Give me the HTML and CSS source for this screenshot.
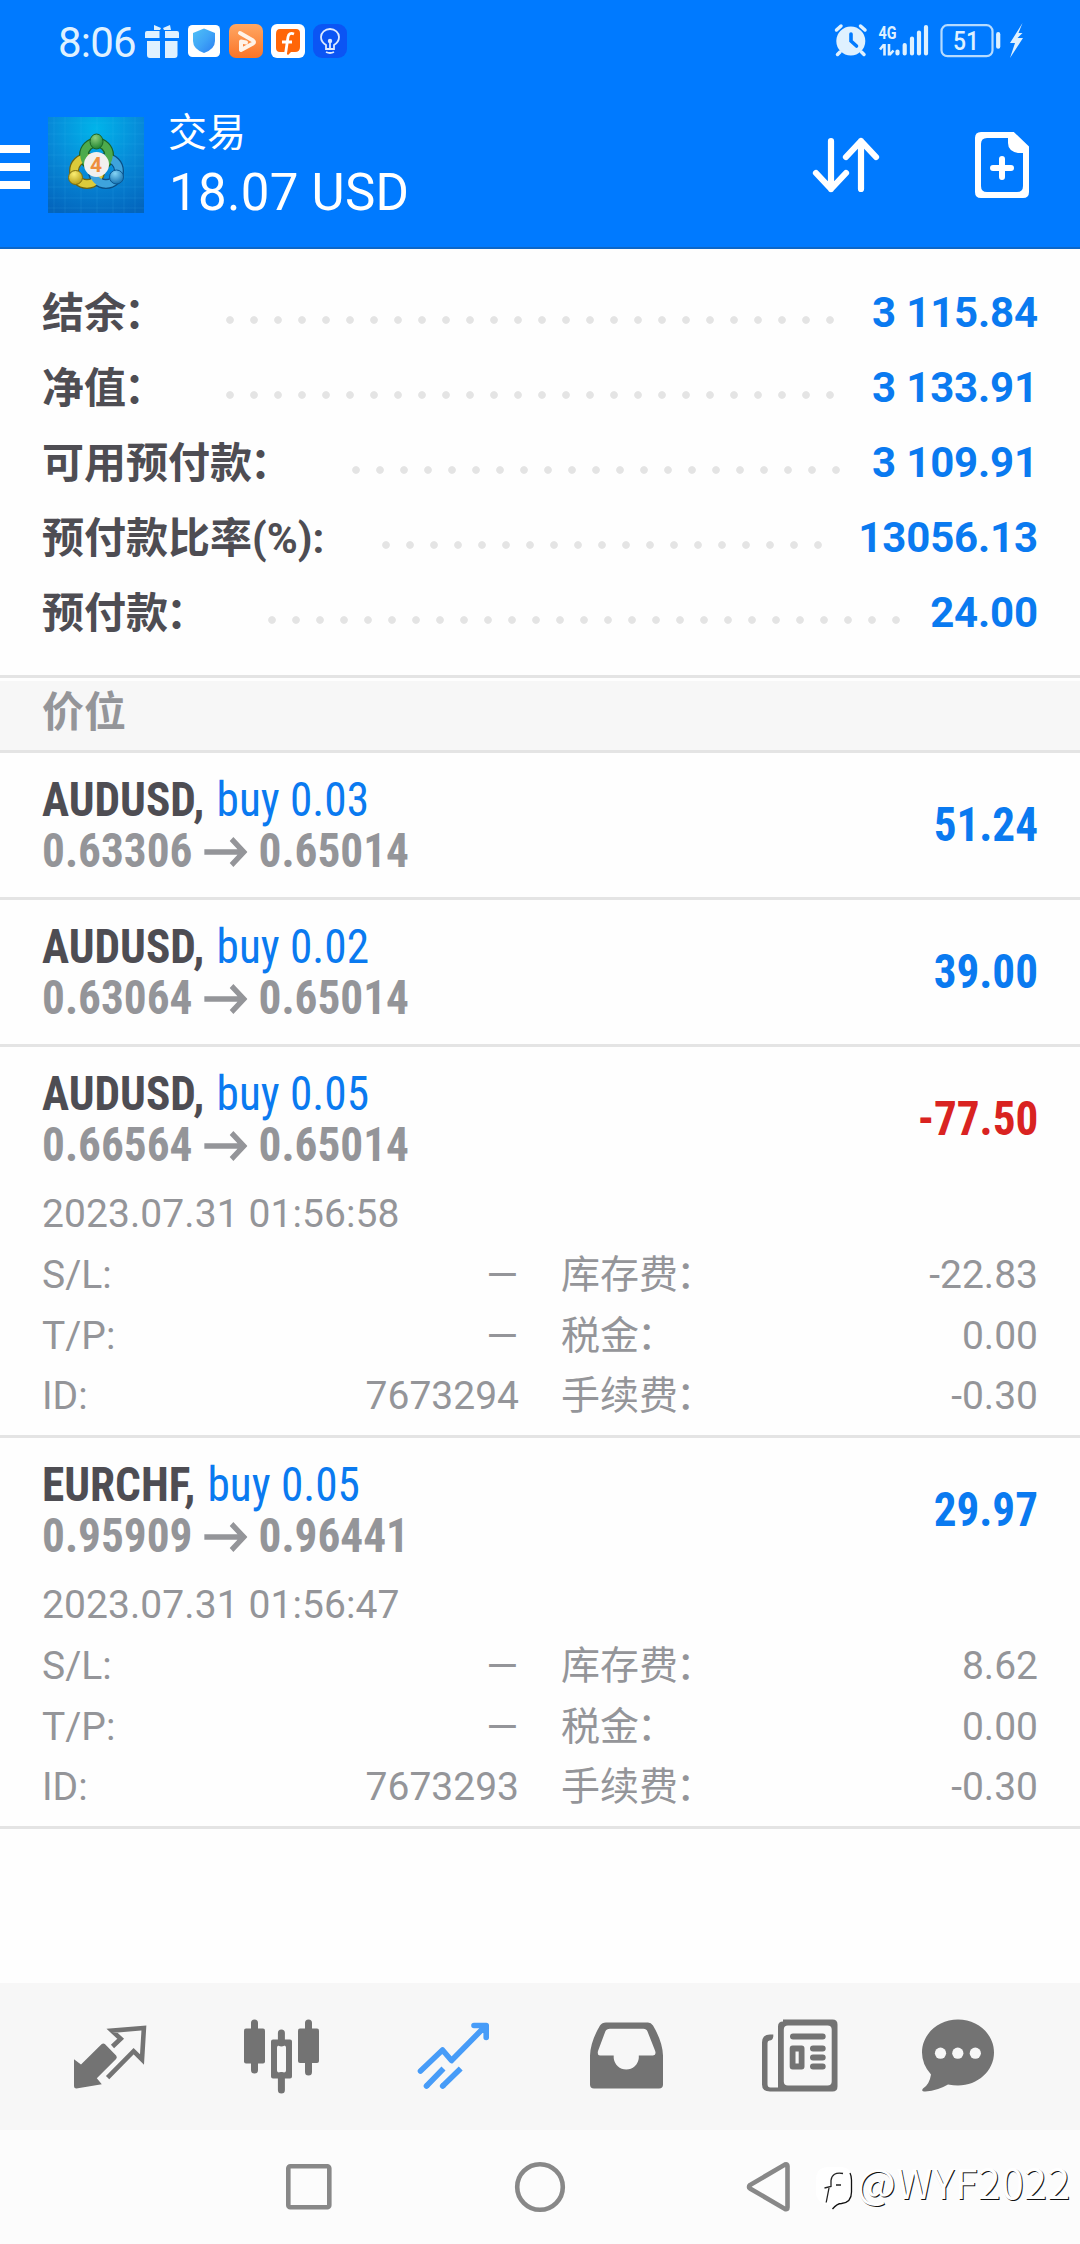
FILE: index.html
```html
<!DOCTYPE html>
<html lang="zh-CN">
<head>
<meta charset="utf-8">
<title>交易</title>
<link rel="stylesheet" href="styles.css">
</head>
<body>
<div class="screen">
  <header class="header">
    <div class="status">
      <span class="clock">8:06</span>
      <svg class="notif" viewBox="144 20 208 42" width="208" height="42">
        <defs>
          <linearGradient id="play" x1="0" y1="0" x2="0" y2="1"><stop offset="0" stop-color="#ffa763"/><stop offset="1" stop-color="#fb7427"/></linearGradient>
          <linearGradient id="shield" x1="0" y1="0" x2="1" y2="1"><stop offset="0" stop-color="#4fc0f5"/><stop offset=".5" stop-color="#3fa5f7"/><stop offset="1" stop-color="#2a7df2"/></linearGradient>
        </defs>
        <g fill="#dff1ff">
          <path d="M154 25l7 3-1 2h-6zM170 25l-7 3 1 2h7z"/>
          <path d="M147 31h12.500v7H145v-5q0-2 2-2zM165 31h12q2 0 2 2v5h-14z"/>
          <path d="M147 41h13v17h-10q-3 0-3-3zM165 41h12.500v14q0 3-3 3H165z"/>
        </g>
        <rect x="188" y="25" width="32" height="32" rx="4.500" fill="#fff"/>
        <path d="M204 28.500l11 4.500v8q0 8-11 12-11-4-11-12v-8z" fill="url(#shield)"/>
        <rect x="229" y="24" width="34" height="34" rx="7" fill="url(#play)"/>
        <path d="M240 33l13 7.500q2 1.500 0 3L241 50v-8.500l5 1" fill="none" stroke="#fff3e8" stroke-width="4" stroke-linejoin="round" stroke-linecap="round"/>
        <rect x="271" y="24" width="34" height="34" rx="6" fill="#fff"/>
        <path d="M280 29h16q4 0 4 4v14q0 5-5 5h-4l-3 3-3-3h-5q-4 0-4-4V34q0-5 4-5z" fill="#ff6608"/>
        <path d="M294 34q-5-2-6 3l-2.500 17M282 42h10" fill="none" stroke="#fff" stroke-width="2.800"/>
        <rect x="313" y="24" width="34" height="34" rx="9" fill="#0b55f4"/>
        <path d="M326 49v-4q-5-3-5-8a9 8 0 0 1 18 0q0 5-5 8v4zM326 52q4 2 8 0M330 41v8" fill="none" stroke="#dceaff" stroke-width="1.800"/>
        <circle cx="330" cy="41" r="2.200" fill="#dceaff"/>
      </svg>
      <svg class="system" viewBox="832 20 194 42" width="194" height="42">
        <g stroke="#dff1ff" stroke-linecap="round" fill="#dff1ff">
          <circle cx="850.800" cy="41" r="14.500" stroke="none"/>
          <path d="M836.500 30l4.500-4M865 30l-4.500-4M840 52l-2.500 2.500M861.500 52l2.500 2.500" stroke-width="3.500"/>
          <path d="M851 34v7l5.500 5" stroke="#007aff" stroke-width="3.600" fill="none"/>
          <g stroke-width="4.200"><path d="M897.500 51.500v2M904.700 45v8.500M912 38.500v15M919 32.500v21M926 27v26.500"/></g>
          <path d="M884.500 44v11.500M884 44.500l-4 5M889 44v11.500M889.500 55l4-4.500" stroke-width="2.600" stroke-linecap="butt" fill="none"/>
          <rect x="941.500" y="25.200" width="51" height="31" rx="6" fill="none" stroke-width="2.200" stroke="#b5dbff"/>
          <path d="M998.200 34.200v12.500" stroke-width="4.200"/>
          <path d="M1022.500 23l-12.500 20h5l-5 15 13-20h-5.500l5-5h-4z" stroke="none"/>
        </g>
        <text x="878.500" y="38.500" class="net" textLength="18" lengthAdjust="spacingAndGlyphs">4G</text>
        <text x="953" y="50" class="pct" textLength="26" lengthAdjust="spacingAndGlyphs">51</text>
      </svg>
    </div>
    <div class="toolbar">
      <div class="menu"><i></i><i></i><i></i></div>
      <svg class="logo" viewBox="0 0 96 96" width="96" height="96">
        <defs>
          <radialGradient id="sky" cx=".5" cy=".12" r=".95"><stop offset="0" stop-color="#00b4ea"/><stop offset=".5" stop-color="#078ad8"/><stop offset="1" stop-color="#0365bd"/></radialGradient>
          <radialGradient id="gr" cx=".4" cy=".25" r=".8"><stop offset="0" stop-color="#8ed07f"/><stop offset="1" stop-color="#19802b"/></radialGradient>
          <radialGradient id="ye" cx=".4" cy=".25" r=".8"><stop offset="0" stop-color="#fbee72"/><stop offset="1" stop-color="#b39a12"/></radialGradient>
          <radialGradient id="bl" cx=".4" cy=".25" r=".8"><stop offset="0" stop-color="#85d4f5"/><stop offset="1" stop-color="#0c6bad"/></radialGradient>
        </defs>
        <rect width="96" height="96" fill="url(#sky)"/>
        <path d="M0 6h96M0 17h96M0 27h96M0 38h96M0 49h96M0 60h96M0 70h96M0 81h96M0 91h96M6 0v96M17 0v96M33 0v96M49 0v96M65 0v96M76 0v96M87 0v96" stroke="#5cc8ff" stroke-opacity=".12" fill="none"/>
        <g fill="none" stroke-width="10">
          <circle cx="39" cy="54" r="13" stroke="#6f6410"/>
          <circle cx="58" cy="54" r="13" stroke="#0a4f86"/>
          <circle cx="48.500" cy="38" r="12.500" stroke="#1c6427"/>
        </g>
        <g fill="none" stroke-width="7.500">
          <circle cx="39" cy="54" r="13" stroke="#dccb3a"/>
          <circle cx="58" cy="54" r="13" stroke="#3ea3dc"/>
          <circle cx="48.500" cy="38" r="12.500" stroke="#4dab4c"/>
        </g>
        <ellipse cx="48.500" cy="24.500" rx="6.500" ry="7.500" fill="url(#gr)" stroke="#1c6427"/>
        <circle cx="27.500" cy="60.500" r="7" fill="url(#ye)" stroke="#7a6c10"/>
        <circle cx="68.500" cy="60" r="7" fill="url(#bl)" stroke="#0b5690"/>
        <circle cx="48.500" cy="47.500" r="12.500" fill="#f1f0ee"/>
        <text x="48" y="55" class="four">4</text>
      </svg>
      <div class="heading">
        <div class="title">交易</div>
        <div class="profit">18.07 USD</div>
      </div>
      <svg class="sort" viewBox="810 130 72 70" width="72" height="70">
        <path d="M831 141v48M816 173l15 16 15-16M861 189v-48M846 157l15-16 15 16" fill="none" stroke="#fff" stroke-width="6.200" stroke-linecap="round" stroke-linejoin="round"/>
      </svg>
      <svg class="neworder" viewBox="970 130 62 70" width="62" height="70">
        <path fill-rule="evenodd" fill="#fff" d="M981 132h32.800L1029 146.500V192q0 6-6 6h-42q-6 0-6-6v-54q0-6 6-6zM987 138q-6 0-6 6v42q0 6 6 6h30q6 0 6-6v-33h-5q-10-2-10-10v-5z"/>
        <path d="M1002 159v18M993 168h18" stroke="#fff" stroke-width="6" stroke-linecap="round"/>
      </svg>
    </div>
  </header>

  <section class="summary">
    <div class="sum"><span class="lbl">结余<i>：</i></span><span class="dots"></span><b>3 115.84</b></div>
    <div class="sum"><span class="lbl">净值<i>：</i></span><span class="dots"></span><b>3 133.91</b></div>
    <div class="sum"><span class="lbl">可用预付款<i>：</i></span><span class="dots"></span><b>3 109.91</b></div>
    <div class="sum"><span class="lbl">预付款比率(%):</span><span class="dots"></span><b>13056.13</b></div>
    <div class="sum"><span class="lbl">预付款<i>：</i></span><span class="dots"></span><b>24.00</b></div>
  </section>
  <h2 class="section">价位</h2>

  <article class="position">
    <div class="main">
      <div class="cond"><div class="deal"><b>AUDUSD,</b> <span>buy 0.03</span></div>
      <div class="price">0.63306 <svg class="to" viewBox="0 0 46 30"><path d="M0 15h42M29 2l13 13-13 13"/></svg> 0.65014</div></div>
      <div class="pl">51.24</div>
    </div>
  </article>
  <article class="position">
    <div class="main">
      <div class="cond"><div class="deal"><b>AUDUSD,</b> <span>buy 0.02</span></div>
      <div class="price">0.63064 <svg class="to" viewBox="0 0 46 30"><path d="M0 15h42M29 2l13 13-13 13"/></svg> 0.65014</div></div>
      <div class="pl">39.00</div>
    </div>
  </article>
  <article class="position open">
    <div class="main">
      <div class="cond"><div class="deal"><b>AUDUSD,</b> <span>buy 0.05</span></div>
      <div class="price">0.66564 <svg class="to" viewBox="0 0 46 30"><path d="M0 15h42M29 2l13 13-13 13"/></svg> 0.65014</div></div>
      <div class="pl loss">-77.50</div>
    </div>
    <div class="date">2023.07.31 01:56:58</div>
    <div class="details">
      <span>S/L:</span><span class="num dash">–</span><span class="fee">库存费<i>：</i></span><span class="num">-22.83</span>
      <span>T/P:</span><span class="num dash">–</span><span class="fee">税金<i>：</i></span><span class="num">0.00</span>
      <span>ID:</span><span class="num">7673294</span><span class="fee">手续费<i>：</i></span><span class="num">-0.30</span>
    </div>
  </article>
  <article class="position open">
    <div class="main">
      <div class="cond"><div class="deal"><b>EURCHF,</b> <span>buy 0.05</span></div>
      <div class="price">0.95909 <svg class="to" viewBox="0 0 46 30"><path d="M0 15h42M29 2l13 13-13 13"/></svg> 0.96441</div></div>
      <div class="pl">29.97</div>
    </div>
    <div class="date">2023.07.31 01:56:47</div>
    <div class="details">
      <span>S/L:</span><span class="num dash">–</span><span class="fee">库存费<i>：</i></span><span class="num">8.62</span>
      <span>T/P:</span><span class="num dash">–</span><span class="fee">税金<i>：</i></span><span class="num">0.00</span>
      <span>ID:</span><span class="num">7673293</span><span class="fee">手续费<i>：</i></span><span class="num">-0.30</span>
    </div>
  </article>

  <nav class="tabs">
    <svg viewBox="62 2012.500 96 88">
      <path d="M74 2058.700l7 5.300 20.500-20.200q1.800-1.500 3.600 0l11 11.200q1.500 1.700 0 3.400L96.800 2077.700l5 6-25.400 4.300q-2.400 0-2.400-2.300z"/>
      <path class="line" stroke-width="4.600" d="M112.500 2046l8.200-7.700-8.800-8.100 32-2.700-1.900 31.500-8.400-8.300-26 26.500"/>
    </svg>
    <svg viewBox="234 2012.500 96 88">
      <path class="line round" stroke-width="7" d="M254.500 2022.500v47M308.500 2022.500v49M281.400 2032.500v10M281.400 2075v14.500"/>
      <rect x="244" y="2028" width="21" height="35" rx="2"/><rect x="298" y="2028" width="21" height="34.500" rx="2"/>
      <path fill-rule="evenodd" d="M273 2039h17q2 0 2 2v35q0 2-2 2h-17q-2 0-2-2v-35q0-2 2-2zM279 2045q-2 0-2 2v23q0 2 2 2h5q2 0 2-2v-23q0-2-2-2z"/>
    </svg>
    <svg viewBox="406 2012.500 96 88" class="active">
      <path class="line round" stroke-width="5.600" d="M420.500 2070.500l22-21 9 10.500 34-34.500M474 2025h12.200v12M426.500 2085.500l.1-.1M442.700 2085.500l.1-.1"/>
      <path class="line" stroke-width="5.600" d="M426.500 2085.500l17-17.500M442.700 2085.500l18-17.500"/>
    </svg>
    <svg viewBox="578 2012.500 96 88">
      <path fill-rule="evenodd" d="M606 2022h42q3 0 5 3 9.500 16 10 30v29q0 4-4 4h-65q-4 0-4-4v-29q.5-14 10-30 2-3 6-3zM610 2028.300q-3.500 0-4.700 2.700l-7.300 19.500q-1 4.500 2 4.500h13.700v2.500a12.600 12.600 0 0 0 25.100 0V2055H653q3.500 0 2.200-4.500l-7.700-19.500q-1-2.700-4.200-2.700z"/>
    </svg>
    <svg viewBox="750 2012.500 96 88">
      <path fill-rule="evenodd" d="M783 2019h49.500q5 0 5 5v62q0 5-5 5H770q-8 0-8-7v-42q0-8 8-8h3.300v2q-.5 4-3.800 4-2 0-2 2.500v41q0 3.500 3 3.500h7.500v-61q0-5 5-5zM788 2025q-4.200 0-4.200 4v52q0 4 4.200 4h39.500q4.200 0 4.200-4v-52q0-4-4.200-4z"/>
      <path class="line round" stroke-width="6" d="M793 2036h29.700M813 2048h9.700M813 2057h9.700M813 2066h9.700"/>
      <path class="line" stroke-width="5.800" stroke-linejoin="round" d="M792.600 2048h9v18h-9z"/>
    </svg>
    <svg viewBox="922 2012.500 96 88">
      <path d="M958 2019c20 0 36 14.800 36 33s-16 33-36 33q-4.500 0-10-1-10 6-22.500 7-5 0-2.500-3 6.500-4 8-14-9-10-9-22c0-18.200 16-33 36-33z"/>
      <g fill="#f7f7f7"><circle cx="940.500" cy="2052.700" r="5.600"/><circle cx="957.800" cy="2052.700" r="5.600"/><circle cx="975.300" cy="2052.700" r="5.600"/></g>
    </svg>
  </nav>
  <footer class="sysnav">
    <svg viewBox="280 2157 60 60"><rect x="288.300" y="2166.300" width="41" height="41" rx="2"/></svg>
    <svg viewBox="510 2157 60 60"><circle cx="540" cy="2187" r="22.800"/></svg>
    <svg viewBox="740 2157 60 60"><path d="M750 2185q-2 2 0 3.500l35 20.500q2.500 1 2.500-1.500v-41.500q0-2.500-2.500-1.500z"/></svg>
  </footer>
  <div class="watermark">
    <svg viewBox="814 2163 42 50" width="42" height="50">
      <path d="M827 2167h13q12 0 12 12v13q0 11-11 12-5 1-8 5l-4-4q-13-2-13-13v-12q0-12 11-13z" fill="#fff"/>
      <path d="M850 2173q1.500 3 1.500 7v12q0 10.500-10 11.500-4.500 0-9 5.500" fill="none" stroke="#111" stroke-width="1.300"/>
      <path d="M843 2173.500q-11-2-12 7v6l-6.500 1.500M836 2185h5M829 2188l-2.800 14.500" fill="none" stroke="#222" stroke-width="1.300"/>
    </svg>
    <span>@WYF2022</span>
  </div>
</div>
</body>
</html>
```
FILE: styles.css
```css
* { box-sizing: border-box; }
body { margin: 0; background: #fefefe; font-family: Roboto, "Noto Sans CJK SC", sans-serif; }
svg { display: block; flex: none; }
i { font-style: normal; }

.screen {
  position: relative;
  display: flex;
  flex-direction: column;
  width: 1080px;
  height: 2244px;
  overflow: hidden;
  color: #949599;
}

/* Header */
.header { height: 249px; background: #007aff; border-bottom: 2px solid #0c67c9; color: #fff; }
.status { display: flex; align-items: center; height: 82px; padding: 0 54px 0 58px; }
.clock { width: 86px; font-size: 42px; letter-spacing: -0.8px; line-height: 42px; padding-top: 3px; color: #dff1ff; }
.system { margin-left: auto; }
.net { font: 700 19px Roboto, sans-serif; fill: #dff1ff; }
.pct { font: 500 25px Roboto, sans-serif; fill: #dff1ff; }
.toolbar { display: flex; align-items: center; height: 165px; padding-right: 48px; }
.menu { display: flex; flex-direction: column; gap: 10px; width: 48px; padding-top: 5px; }
.menu i { width: 30px; height: 8px; background: #fff; }
.four { font: 700 21px Roboto, sans-serif; fill: #ee8e3e; text-anchor: middle; }
.heading { margin-left: 25px; padding-top: 3px; }
.title { font-size: 39px; line-height: 54px; margin-left: -1px; }
.profit { font-size: 51px; line-height: 66px; letter-spacing: 0.3px; }
.sort { margin-left: auto; }
.neworder { margin-left: 88px; }

/* Account summary */
.summary { height: 429px; padding: 26px 42px 0; background: #fefefe; border-bottom: 3px solid #e4e4e4; }
.sum { display: flex; height: 75px; line-height: 75px; font-size: 42px; }
.lbl { padding-top: 1px; color: #4e4d53; font-weight: 700; }
.lbl i, .fee i { margin: 0 2px 0 -2px; }
.dots {
  flex: 1;
  height: 24px;
  margin: 33px 26px 0 50px;
  background: radial-gradient(circle at 12px 12px, #e4e4e4 3.4px, transparent 4.200px) 0 0 / 24px 24px;
}
.sum b { color: #0a7af0; white-space: pre; letter-spacing: -0.15px; }
.section {
  height: 72px;
  margin: 3px 0 0;
  padding: 0 42px;
  font-size: 42px;
  line-height: 64px;
  background: #f7f7f7;
  border-bottom: 3px solid #e4e4e4;
}

/* Positions */
.position { height: 147px; padding: 0 42px; border-bottom: 3px solid #e4e4e4; }
.position.open { height: 391px; }
.main { display: flex; justify-content: space-between; align-items: center; height: 144px; font-size: 48px; font-stretch: 75%; }
.cond { line-height: 51px; transform: scaleX(0.943); transform-origin: left; }
.deal b { color: #4e4d53; }
.deal span { margin-left: 2px; }
.deal span, .pl { color: #0a7af0; }
.price, .pl { font-weight: 700; }
.pl { padding-bottom: 2px; transform: scaleX(0.94); transform-origin: right; }
.to { display: inline-block; width: 46px; height: 30px; margin: 0 1px; fill: none; stroke: #949599; stroke-width: 5.500px; }
.pl.loss { color: #d92321; }
.date { font-size: 39px; line-height: 60px; margin: -7px 0 1px; letter-spacing: 0.08px; }
.details { display: grid; grid-template-columns: 238px 239px 238px 1fr; font-size: 39px; line-height: 60.700px; }
.num { text-align: right; }
.dash { transform: translateX(1.5px) scaleX(1.4); transform-origin: right; margin-left: 180px; }
.fee { padding-left: 42px; }

/* Bottom bars */
.tabs { display: flex; align-items: center; gap: 76px; height: 147px; margin-top: auto; padding: 0 62px; background: #f7f7f7; }
.tabs svg { width: 96px; height: 88px; fill: #737373; stroke: none; }
.tabs .line { fill: none; stroke: #737373; }
.tabs .round { stroke-linecap: round; stroke-linejoin: round; }
.tabs .active .line { stroke: #479cf8; }
.sysnav { display: flex; align-items: center; justify-content: center; gap: 170px; height: 114px; background: #fcfcfc; }
.sysnav svg { width: 60px; height: 60px; fill: none; stroke: #888; stroke-width: 4.600px; }
.watermark { position: absolute; left: 814px; top: 2163px; display: flex; align-items: flex-start; color: #fff; }
.watermark span { font: 400 41px/50px "Noto Sans CJK SC", sans-serif; letter-spacing: 0.4px; margin: -7px 0 0 1px; text-shadow: 1px 1px 0 #111; }
```
